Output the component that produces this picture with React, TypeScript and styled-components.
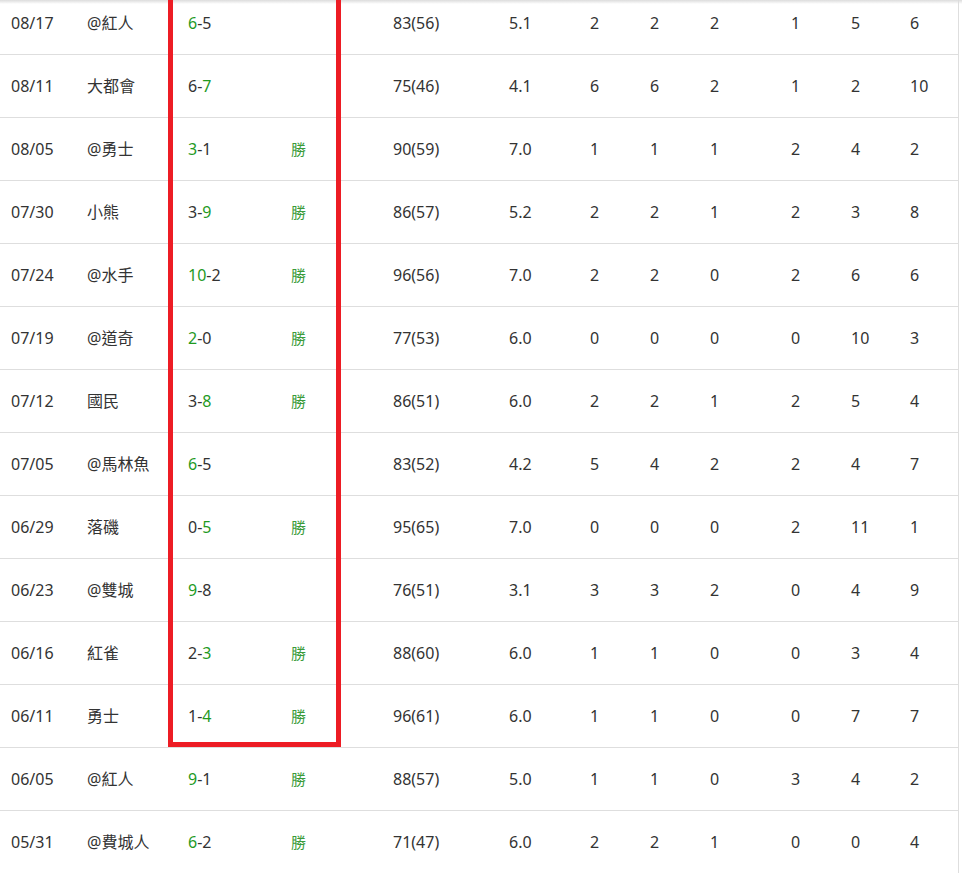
import React from 'react'
import styled, { createGlobalStyle } from 'styled-components'

const GlobalStyle = createGlobalStyle`
  html, body {
    margin: 0;
    padding: 0;
    background: #fff;
  }
  body {
    font-family: "Noto Sans", "Noto Sans CJK TC", sans-serif;
    font-size: 16px;
    color: #333;
  }
`

const Viewport = styled.div`
  position: relative;
  height: 873px;
  overflow: hidden;
  &::after {
    content: '';
    position: absolute;
    left: 0;
    right: 0;
    top: 0;
    height: 4px;
    background: linear-gradient(#dcdcdc, rgba(255, 255, 255, 0));
    z-index: 1;
  }
`

const Table = styled.div`
  position: relative;
  width: 959px;
  margin-top: -8px;
  border-right: 1px solid #dedede;
  box-sizing: border-box;
`

const Row = styled.div`
  display: grid;
  grid-template-columns: 76px 101px 103px 102px 116px 81px 60px 60px 81px 60px 59px 59px;
  height: 62px;
  align-items: center;
  border-bottom: 1px solid #dedede;
`

const Cell = styled.div`
  padding-left: 11px;
  white-space: nowrap;
  line-height: 1;
`

const Runs = styled.span<{ $win?: boolean }>`
  color: ${p => (p.$win ? '#1f9a1f' : '#333')};
`

const Win = styled(Cell)`
  color: #3a9b3a;
  font-size: 15px;
`

const Highlight = styled.div`
  position: absolute;
  left: 168px;
  top: -20px;
  width: 173px;
  height: 775px;
  box-sizing: border-box;
  border: 5px solid #ed1c24;
  z-index: 2;
  pointer-events: none;
`

type Game = [string, string, number, number, boolean, string, string, number, number, number, number, number, number]

const games: Game[] = [
  ['08/17', '@紅人', 6, 5, false, '83(56)', '5.1', 2, 2, 2, 1, 5, 6],
  ['08/11', '大都會', 6, 7, false, '75(46)', '4.1', 6, 6, 2, 1, 2, 10],
  ['08/05', '@勇士', 3, 1, true, '90(59)', '7.0', 1, 1, 1, 2, 4, 2],
  ['07/30', '小熊', 3, 9, true, '86(57)', '5.2', 2, 2, 1, 2, 3, 8],
  ['07/24', '@水手', 10, 2, true, '96(56)', '7.0', 2, 2, 0, 2, 6, 6],
  ['07/19', '@道奇', 2, 0, true, '77(53)', '6.0', 0, 0, 0, 0, 10, 3],
  ['07/12', '國民', 3, 8, true, '86(51)', '6.0', 2, 2, 1, 2, 5, 4],
  ['07/05', '@馬林魚', 6, 5, false, '83(52)', '4.2', 5, 4, 2, 2, 4, 7],
  ['06/29', '落磯', 0, 5, true, '95(65)', '7.0', 0, 0, 0, 2, 11, 1],
  ['06/23', '@雙城', 9, 8, false, '76(51)', '3.1', 3, 3, 2, 0, 4, 9],
  ['06/16', '紅雀', 2, 3, true, '88(60)', '6.0', 1, 1, 0, 0, 3, 4],
  ['06/11', '勇士', 1, 4, true, '96(61)', '6.0', 1, 1, 0, 0, 7, 7],
  ['06/05', '@紅人', 9, 1, true, '88(57)', '5.0', 1, 1, 0, 3, 4, 2],
  ['05/31', '@費城人', 6, 2, true, '71(47)', '6.0', 2, 2, 1, 0, 0, 4],
]

const App = () => (
  <Viewport>
    <GlobalStyle />
    <Table>
      {games.map(([date, opp, a, b, win, pitches, ip, ...stats]) => (
        <Row key={date}>
          <Cell>{date}</Cell>
          <Cell>{opp}</Cell>
          <Cell>
            <Runs $win={a > b}>{a}</Runs>-<Runs $win={b > a}>{b}</Runs>
          </Cell>
          <Win>{win ? '勝' : ''}</Win>
          <Cell>{pitches}</Cell>
          <Cell>{ip}</Cell>
          {stats.map((s, i) => (
            <Cell key={i}>{s}</Cell>
          ))}
        </Row>
      ))}
      <Highlight />
    </Table>
  </Viewport>
)

export default App
